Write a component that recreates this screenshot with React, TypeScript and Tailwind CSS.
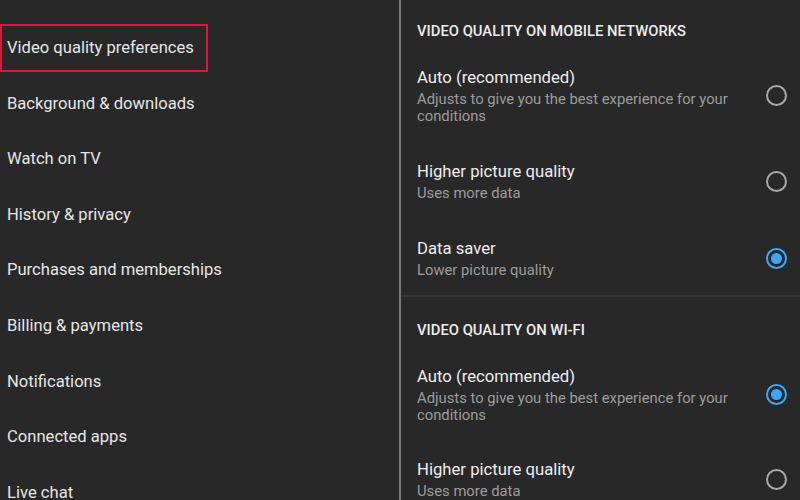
import React from 'react';

type Option = { title: string; sub: string[]; selected?: boolean };

const menu = [
  'Autoplay',
  'Video quality preferences',
  'Background & downloads',
  'Watch on TV',
  'History & privacy',
  'Purchases and memberships',
  'Billing & payments',
  'Notifications',
  'Connected apps',
  'Live chat',
];

const mobile: Option[] = [
  { title: 'Auto (recommended)', sub: ['Adjusts to give you the best experience for your', 'conditions'] },
  { title: 'Higher picture quality', sub: ['Uses more data'] },
  { title: 'Data saver', sub: ['Lower picture quality'], selected: true },
];

const wifi: Option[] = [
  { title: 'Auto (recommended)', sub: ['Adjusts to give you the best experience for your', 'conditions'], selected: true },
  { title: 'Higher picture quality', sub: ['Uses more data'] },
];

const Radio: React.FC<{ on?: boolean }> = ({ on }) =>
  on ? (
    <div className="w-[21px] h-[21px] rounded-full border-2 border-[#3ea6ff] flex items-center justify-center shrink-0">
      <div className="w-[11px] h-[11px] rounded-full bg-[#3ea6ff]" />
    </div>
  ) : (
    <div className="w-[21px] h-[21px] rounded-full border-2 border-[#a8a8a8] shrink-0" />
  );

const OptionRow: React.FC<{ opt: Option }> = ({ opt }) => (
  <div className="flex items-center justify-between pr-[13px]">
    <div>
      <div className="text-[16.7px] leading-[24px] text-[#ededed]">{opt.title}</div>
      <div className="mt-[1px] text-[14.8px] leading-[17px] text-[#9c9c9c]">
        {opt.sub.map((s) => (
          <div key={s}>{s}</div>
        ))}
      </div>
    </div>
    <Radio on={opt.selected} />
  </div>
);

export default function App() {
  return (
    <div
      className="w-[800px] h-[500px] overflow-hidden bg-[#282828] flex"
      style={{ fontFamily: 'Roboto, "Noto Sans", sans-serif' }}
    >
      {/* left menu */}
      <div className="w-[401px] shrink-0 border-r-2 border-[#767676] -mt-[35px]">
        {menu.map((m) => (
          <div key={m} className="h-[55.6px] flex items-center text-[16.6px] text-[#e6e6e6] whitespace-nowrap">
            {m === 'Video quality preferences' ? (
              <div className="w-[208px] h-[48px] border-2 border-[#e0163e] flex items-center pl-[5px]">
                {m}
              </div>
            ) : (
              <div className="pl-[7px]">{m}</div>
            )}
          </div>
        ))}
      </div>

      {/* right panel */}
      <div className="flex-1">
        <div className="pl-4 pb-[16px] border-b-2 border-[#353535]">
          <div className="pt-[21px] text-[14.8px] leading-5 font-medium text-[#ececec]">
            VIDEO QUALITY ON MOBILE NETWORKS
          </div>
          <div className="mt-[25px] flex flex-col gap-[35px]">
            {mobile.map((o) => (
              <OptionRow key={o.title} opt={o} />
            ))}
          </div>
        </div>
        <div className="pl-4">
          <div className="pt-[23px] text-[14.8px] leading-5 font-medium text-[#ececec]">
            VIDEO QUALITY ON WI-FI
          </div>
          <div className="mt-[25px] flex flex-col gap-[34px]">
            {wifi.map((o) => (
              <OptionRow key={o.title} opt={o} />
            ))}
          </div>
        </div>
      </div>
    </div>
  );
}
